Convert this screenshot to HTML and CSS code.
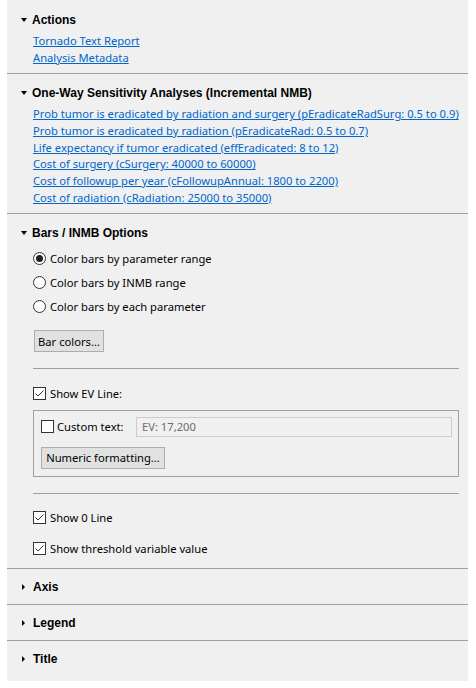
FILE: index.html
```html
<!DOCTYPE html>
<html>
<head>
<meta charset="utf-8">
<link rel="stylesheet" href="styles.css">
</head>
<body>
<div class="panel">
  <section class="section">
    <div class="header"><span class="tri down"></span><span class="title">Actions</span></div>
    <div class="links">
      <a class="link">Tornado Text Report</a>
      <a class="link">Analysis Metadata</a>
    </div>
  </section>
  <section class="section">
    <div class="header"><span class="tri down"></span><span class="title">One-Way Sensitivity Analyses (Incremental NMB)</span></div>
    <div class="links">
      <a class="link">Prob tumor is eradicated by radiation and surgery (pEradicateRadSurg: 0.5 to 0.9)</a>
      <a class="link">Prob tumor is eradicated by radiation (pEradicateRad: 0.5 to 0.7)</a>
      <a class="link">Life expectancy if tumor eradicated (effEradicated: 8 to 12)</a>
      <a class="link">Cost of surgery (cSurgery: 40000 to 60000)</a>
      <a class="link">Cost of followup per year (cFollowupAnnual: 1800 to 2200)</a>
      <a class="link">Cost of radiation (cRadiation: 25000 to 35000)</a>
    </div>
  </section>
  <section class="section">
    <div class="header"><span class="tri down"></span><span class="title">Bars / INMB Options</span></div>
    <div class="options">
      <div class="radios">
        <label class="row"><span class="radio checked"></span>Color bars by parameter range</label>
        <label class="row"><span class="radio"></span>Color bars by INMB range</label>
        <label class="row"><span class="radio"></span>Color bars by each parameter</label>
      </div>
      <button class="btn btn-bar">Bar colors...</button>
      <hr class="rule rule-a">
      <label class="row"><span class="check on"><svg width="11" height="11" viewBox="0 0 11 11"><path d="M1.5 5.5 L4 8 L9.5 2.5" fill="none" stroke="#333" stroke-width="1"/></svg></span>Show EV Line:</label>
      <div class="group">
        <div class="group-row">
          <label class="inline"><span class="check"></span>Custom text:</label>
          <div class="input">EV: 17,200</div>
        </div>
        <button class="btn btn-num">Numeric formatting...</button>
      </div>
      <hr class="rule rule-b">
      <label class="row"><span class="check on"><svg width="11" height="11" viewBox="0 0 11 11"><path d="M1.5 5.5 L4 8 L9.5 2.5" fill="none" stroke="#333" stroke-width="1"/></svg></span>Show 0 Line</label>
      <label class="row row-gap"><span class="check on"><svg width="11" height="11" viewBox="0 0 11 11"><path d="M1.5 5.5 L4 8 L9.5 2.5" fill="none" stroke="#333" stroke-width="1"/></svg></span>Show threshold variable value</label>
    </div>
  </section>
  <section class="section collapsed">
    <div class="header"><span class="tri right"></span><span class="title">Axis</span></div>
  </section>
  <section class="section collapsed">
    <div class="header"><span class="tri right"></span><span class="title">Legend</span></div>
  </section>
  <section class="section collapsed last">
    <div class="header"><span class="tri right"></span><span class="title">Title</span></div>
  </section>
</div>
</body>
</html>
```
FILE: styles.css
```css
* { box-sizing: border-box; }
body {
  margin: 0;
  background: #ffffff;
  font-family: "Noto Sans", "Open Sans", sans-serif;
  font-size: 11.2px;
  color: #000;
}
.panel {
  width: 461px;
  margin-left: 7px;
  background: #f0f0f0;
  padding-top: 1px;
  padding-bottom: 5px;
}
.section {
  border-bottom: 1px solid #a0a0a0;
  padding: 9px 9px 7px 0;
}
.section.last { border-bottom: none; }
.header {
  display: flex;
  align-items: center;
  height: 19px;
}
.tri {
  width: 0;
  height: 0;
  display: inline-block;
}
.tri.down {
  margin-left: 14px;
  margin-right: 5px;
  border-left: 3.5px solid transparent;
  border-right: 3.5px solid transparent;
  border-top: 4px solid #000;
}
.tri.right {
  margin-left: 15px;
  margin-right: 8px;
  border-top: 3.5px solid transparent;
  border-bottom: 3.5px solid transparent;
  border-left: 3px solid #000;
}
.title {
  font-family: "Liberation Sans", Arial, sans-serif;
  font-weight: bold;
  font-size: 12px;
}
.links {
  display: flex;
  flex-direction: column;
  align-items: flex-start;
  padding-left: 26px;
  margin-top: 4px;
}
.link {
  color: #0066cc;
  text-decoration: underline;
  line-height: 16.67px;
  white-space: nowrap;
}
.options {
  padding-left: 26px;
  margin-top: 4px;
  display: flex;
  flex-direction: column;
  align-items: flex-start;
}
.radios { display: flex; flex-direction: column; }
.row {
  display: flex;
  align-items: center;
  height: 24px;
  gap: 4px;
  white-space: nowrap;
}
.row-gap { margin-top: 7px; }
.radio {
  width: 13px;
  height: 13px;
  border: 1px solid #333;
  border-radius: 50%;
  background: #fff;
  display: flex;
  align-items: center;
  justify-content: center;
}
.radio.checked::after {
  content: "";
  width: 7px;
  height: 7px;
  border-radius: 50%;
  background: #222;
}
.check {
  width: 13px;
  height: 13px;
  border: 1px solid #333;
  background: #fff;
  display: flex;
  align-items: center;
  justify-content: center;
}
.btn {
  font: inherit;
  background: #e1e1e1;
  border: 1px solid #adadad;
  height: 22px;
  padding: 0;
  color: #000;
  margin: 0;
  white-space: nowrap;
  text-align: center;
}
.btn-bar { width: 70px; margin-left: 1px; margin-top: 12px; }
.rule {
  width: 100%;
  height: 0;
  border: none;
  border-top: 1px solid #a0a0a0;
  margin: 0;
}
.rule-a { margin-top: 16px; margin-bottom: 12px; }
.rule-b { margin-top: 16px; margin-bottom: 12px; }
.group {
  width: 100%;
  margin-top: 4.5px;
  border: 1px solid #a0a0a0;
  padding: 6px 6px 7px 7px;
  display: flex;
  flex-direction: column;
  align-items: flex-start;
}
.group-row {
  display: flex;
  align-items: center;
  width: 100%;
}
.inline {
  display: flex;
  align-items: center;
  gap: 3px;
  width: 95px;
  white-space: nowrap;
}
.input {
  flex: 1;
  height: 20px;
  border: 1px solid #cccccc;
  background: #f0f0f0;
  color: #6d6d6d;
  padding-left: 5px;
  line-height: 18px;
}
.btn-num { width: 124px; margin-top: 10px; }
```
